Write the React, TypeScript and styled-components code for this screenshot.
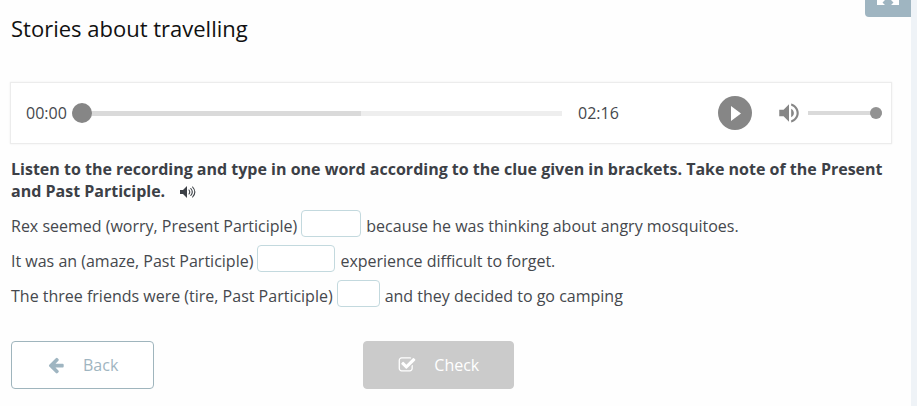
import React, { useState } from "react";
import styled, { createGlobalStyle } from "styled-components";

const GlobalStyle = createGlobalStyle`
  *, *::before, *::after { box-sizing: border-box; }
  body {
    margin: 0;
    background: #eff3f7;
    color: #45484d;
    font-family: "Open Sans", "Noto Sans", sans-serif;
    font-size: 16px;
    line-height: 22px;
  }
  button, input { font: inherit; }
`;

const Page = styled.main`
  position: relative;
  min-height: 100vh;
  margin-right: 6px;
  padding: 13px 19px 17px 11px;
  background: #fefefe;
  overflow: hidden;
`;

const Title = styled.h1`
  margin: 0 0 39px;
  color: #111;
  font-size: 22px;
  font-weight: 400;
  line-height: 30px;
`;

const FullscreenButton = styled.button`
  position: absolute;
  top: -30px;
  right: 0;
  display: flex;
  align-items: center;
  justify-content: center;
  width: 46px;
  height: 47px;
  padding: 0;
  border: 0;
  border-radius: 4px 0 0 4px;
  background: #9fb5c1;
  color: #fff;
`;

const Player = styled.section`
  display: flex;
  align-items: center;
  height: 62px;
  margin-left: -1px;
  padding: 0 9px 0 15px;
  border: 1px solid #ececec;
  background: #fff;
  box-shadow: 0 0 2px #eee;
`;

const Time = styled.span`
  flex: none;
  width: 46px;
`;

const Slider = styled.input<{ $thumb: number; $line: number; $track: string; $knob: string }>`
  appearance: none;
  flex: none;
  height: 20px;
  margin: 0;
  background: transparent;

  &::-webkit-slider-runnable-track {
    height: ${(p) => p.$line}px;
    background: ${(p) => p.$track};
  }
  &::-webkit-slider-thumb {
    appearance: none;
    width: ${(p) => p.$thumb}px;
    height: ${(p) => p.$thumb}px;
    margin-top: calc((${(p) => p.$line}px - ${(p) => p.$thumb}px) / 2);
    border: 0;
    border-radius: 50%;
    background: ${(p) => p.$knob};
  }
`;

const SeekSlider = styled(Slider)`
  flex: 1 1 0;
  min-width: 60px;
  margin-right: 16px;
`;

const VolumeSlider = styled(Slider)`
  width: 74px;
  margin-left: 6px;
`;

const IconButton = styled.button`
  display: flex;
  align-items: center;
  justify-content: center;
  flex: none;
  padding: 0;
  border: 0;
  background: transparent;
  color: #868686;
`;

const PlayButton = styled(IconButton)`
  width: 34px;
  height: 34px;
  margin: 0 24px 0 94px;
  border-radius: 50%;
  background: #868686;
  color: #fff;
`;

const Instruction = styled.h2`
  margin: 14px 0 6px;
  color: #3c4046;
  font-size: 16px;
  font-weight: 700;
  line-height: 22px;
`;

const ListenButton = styled(IconButton)`
  display: inline-flex;
  margin-left: 15px;
  color: #3c4046;
  vertical-align: -1px;
`;

const Sentence = styled.label`
  display: flex;
  align-items: center;
  height: 35px;
`;

const Blank = styled.input<{ $width: number }>`
  width: ${(p) => p.$width}px;
  height: 27px;
  margin: 0 5px 5px 4px;
  padding: 0 6px;
  border: 1px solid #c3d9de;
  border-radius: 4px;
  background: #fff;
  color: inherit;
`;

const Actions = styled.div`
  display: flex;
  gap: 209px;
  margin-top: 28px;
`;

const ActionButton = styled.button<{ $filled?: boolean }>`
  display: flex;
  align-items: center;
  gap: 18px;
  height: 48px;
  padding: 0 ${(p) => (p.$filled ? 34 : 35)}px;
  border: 1px solid ${(p) => (p.$filled ? "#cbcbcb" : "#9fb5bd")};
  border-radius: 4px;
  background: ${(p) => (p.$filled ? "#cbcbcb" : "#fff")};
  color: ${(p) => (p.$filled ? "#fff" : "#9fb5c1")};
`;

const sentences = [
  { id: "worry", before: "Rex seemed (worry, Present Participle)", width: 60, after: "because he was thinking about angry mosquitoes." },
  { id: "amaze", before: "It was an (amaze, Past Participle)", width: 78, after: "experience difficult to forget." },
  { id: "tire", before: "The three friends were (tire, Past Participle)", width: 43, after: "and they decided to go camping" },
];

const FullscreenIcon = () => (
  <svg width="22" height="22" viewBox="0 0 22 22" fill="currentColor" aria-hidden="true">
    <path d="M0 0h8L5.500 2.500 9 6 6 9 2.500 5.500 0 8zM22 0h-8l2.500 2.500L13 6l3 3 3.500-3.500L22 8zM0 22h8l-2.500-2.500L9 16l-3-3-3.500 3.500L0 14zM22 22h-8l2.500-2.500L13 16l3-3 3.500 3.500L22 14z" />
  </svg>
);

const PlayIcon = () => (
  <svg width="34" height="34" viewBox="0 0 34 34" fill="currentColor" aria-hidden="true">
    <path d="M13 10v15l10-7.500z" />
  </svg>
);

const VolumeIcon = () => (
  <svg width="26" height="26" viewBox="0 0 24 24" fill="currentColor" aria-hidden="true">
    <path d="M3 9v6h4l5 5V4L7 9H3zm13.500 3c0-1.770-1.020-3.290-2.500-4.030v8.050c1.480-.73 2.500-2.250 2.500-4.020zM14 3.230v2.060c2.890.86 5 3.540 5 6.710s-2.110 5.850-5 6.710v2.060c4.010-.91 7-4.490 7-8.770s-2.990-7.860-7-8.770z" />
  </svg>
);

const SpeakerIcon = () => (
  <svg width="16" height="12" viewBox="0 0 16 12" aria-hidden="true">
    <path d="M0 4h3l4-4v12L3 8H0z" fill="currentColor" />
    <path d="M9 4q1.500 2 0 4M10.800 2.500q3 3.500 0 7M12.600 1q4.500 5 0 10" fill="none" stroke="currentColor" strokeWidth="1.100" strokeLinecap="round" />
  </svg>
);

const BackIcon = () => (
  <svg width="18" height="18" viewBox="0 0 1792 1792" fill="currentColor" aria-hidden="true">
    <path d="M1664 896v128q0 53-32.500 90.500t-84.500 37.500h-704l293 294q38 36 38 90t-38 90l-75 76q-37 37-90 37-52 0-91-37l-651-652q-37-37-37-90 0-52 37-91l651-650q38-38 91-38 52 0 90 38l75 74q38 38 38 91t-38 91l-293 293h704q52 0 84.500 37.500t32.500 90.500z" />
  </svg>
);

const CheckIcon = () => (
  <svg width="18" height="18" viewBox="0 0 1792 1792" fill="currentColor" aria-hidden="true">
    <path d="M1472 930v318q0 119-84.500 203.500t-203.500 84.500h-832q-119 0-203.500-84.500t-84.500-203.500v-832q0-119 84.500-203.500t203.500-84.500h832q63 0 117 25 15 7 18 23 3 17-9 29l-49 49q-10 10-23 10-3 0-9-2-23-6-45-6h-832q-66 0-113 47t-47 113v832q0 66 47 113t113 47h832q66 0 113-47t47-113v-254q0-13 9-22l64-64q10-10 23-10 6 0 12 3 20 8 20 29zm231-489l-814 814q-24 24-57 24t-57-24l-430-430q-24-24-24-57t24-57l110-110q24-24 57-24t57 24l263 263 647-647q24-24 57-24t57 24l110 110q24 24 24 57t-24 57z" />
  </svg>
);

export default function App() {
  const [position, setPosition] = useState(0);
  const [volume, setVolume] = useState(100);
  const [answers, setAnswers] = useState<Record<string, string>>({});

  return (
    <>
      <GlobalStyle />
      <Page>
        <FullscreenButton type="button" aria-label="Full screen"><FullscreenIcon /></FullscreenButton>
        <Title>Stories about travelling</Title>
        <Player aria-label="Audio player">
          <Time>00:00</Time>
          <SeekSlider
            type="range" aria-label="Seek" min={0} max={136} value={position}
            onChange={(e: React.ChangeEvent<HTMLInputElement>) => setPosition(Number(e.target.value))}
            $thumb={20} $line={5} $knob="#868686"
            $track="linear-gradient(to right, #dadada 59%, #eee 59%)"
          />
          <Time>02:16</Time>
          <PlayButton type="button" aria-label="Play"><PlayIcon /></PlayButton>
          <IconButton type="button" aria-label="Mute"><VolumeIcon /></IconButton>
          <VolumeSlider
            type="range" aria-label="Volume" min={0} max={100} value={volume}
            onChange={(e: React.ChangeEvent<HTMLInputElement>) => setVolume(Number(e.target.value))}
            $thumb={12} $line={4} $knob="#929292" $track="#dadada"
          />
        </Player>
        <Instruction>
          Listen to the recording and type in one word according to the clue given in brackets. Take note of the Present and Past Participle.
          <ListenButton type="button" aria-label="Listen to the instruction"><SpeakerIcon /></ListenButton>
        </Instruction>
        {sentences.map((s) => (
          <Sentence key={s.id}>
            {s.before}
            <Blank
              type="text" $width={s.width} value={answers[s.id] ?? ""}
              onChange={(e: React.ChangeEvent<HTMLInputElement>) => setAnswers({ ...answers, [s.id]: e.target.value })}
            />
            {s.after}
          </Sentence>
        ))}
        <Actions>
          <ActionButton type="button"><BackIcon />Back</ActionButton>
          <ActionButton type="button" $filled><CheckIcon />Check</ActionButton>
        </Actions>
      </Page>
    </>
  );
}
